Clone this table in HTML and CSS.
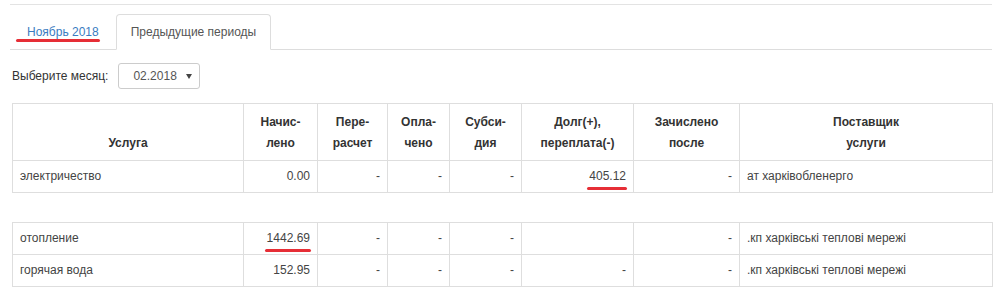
FILE: index.html
```html
<!DOCTYPE html>
<html lang="ru">
<head>
<meta charset="utf-8">
<title>Периоды</title>
<link rel="stylesheet" href="styles.css">
</head>
<body>
<div class="page">
  <div class="top-rule"></div>
  <ul class="tabs">
    <li class="tab"><a class="tab-link marked-tab" href="#">Ноябрь 2018</a></li>
    <li class="tab active"><a class="tab-link" href="#">Предыдущие периоды</a></li>
  </ul>
  <div class="month-row">
    <span class="month-label">Выберите месяц:</span>
    <span class="select">02.2018<span class="caret"></span></span>
  </div>
  <table class="grid">
    <colgroup>
      <col class="c1"><col class="c2"><col class="c3"><col class="c4"><col class="c5"><col class="c6"><col class="c7"><col class="c8">
    </colgroup>
    <thead>
      <tr>
        <th>Услуга</th>
        <th>Начис-<br>лено</th>
        <th>Пере-<br>расчет</th>
        <th>Опла-<br>чено</th>
        <th>Субси-<br>дия</th>
        <th>Долг(+),<br>переплата(-)</th>
        <th>Зачислено<br>после</th>
        <th>Поставщик<br>услуги</th>
      </tr>
    </thead>
    <tbody>
      <tr>
        <td>электричество</td>
        <td class="num">0.00</td>
        <td class="num">-</td>
        <td class="num">-</td>
        <td class="num">-</td>
        <td class="num"><span class="mark">405.12</span></td>
        <td class="num">-</td>
        <td>ат харківобленерго</td>
      </tr>
    </tbody>
  </table>
  <table class="grid second">
    <colgroup>
      <col class="c1"><col class="c2"><col class="c3"><col class="c4"><col class="c5"><col class="c6"><col class="c7"><col class="c8">
    </colgroup>
    <tbody>
      <tr>
        <td>отопление</td>
        <td class="num"><span class="mark">1442.69</span></td>
        <td class="num">-</td>
        <td class="num">-</td>
        <td class="num">-</td>
        <td class="num"></td>
        <td class="num">-</td>
        <td>.кп харківські теплові мережі</td>
      </tr>
      <tr>
        <td>горячая вода</td>
        <td class="num">152.95</td>
        <td class="num">-</td>
        <td class="num">-</td>
        <td class="num">-</td>
        <td class="num">-</td>
        <td class="num">-</td>
        <td>.кп харківські теплові мережі</td>
      </tr>
    </tbody>
  </table>
</div>
</body>
</html>
```

FILE: styles.css
```css
* { box-sizing: border-box; }
html, body { margin: 0; padding: 0; background: #fff; }
body {
  font-family: "Liberation Sans", Arial, sans-serif;
  font-size: 12px;
  color: #333;
}
.page {
  width: 992px;
  padding: 4px 0 0 12px;
}
.top-rule {
  margin-left: -2px;
  border-top: 1px solid #e3e3e3;
}
.tabs {
  list-style: none;
  margin: 9px 0 0 -2px;
  padding: 0 0 0 2px;
  display: flex;
  border-bottom: 1px solid #ddd;
}
.tab {
  margin: 0 2px -1px 0;
}
.tab-link {
  display: block;
  padding: 9px 14px;
  line-height: 16px;
  border: 1px solid transparent;
  border-radius: 4px 4px 0 0;
  text-decoration: none;
  color: #3a7cc1;
}
.tab.active .tab-link {
  color: #555;
  background: #fff;
  border-color: #ddd #ddd #fff;
}
.marked-tab { position: relative; }
.marked-tab::after {
  content: "";
  position: absolute;
  left: 3px;
  right: 13px;
  bottom: 7px;
  height: 3px;
  border-radius: 2px;
  background: #e62e36;
}
.month-row {
  display: flex;
  align-items: center;
  gap: 10px;
  margin-top: 13px;
}
.month-label { color: #333; }
.select {
  display: flex;
  align-items: center;
  width: 82px;
  height: 26px;
  padding: 0 0 0 14px;
  border: 1px solid #ccc;
  border-radius: 3px;
  color: #555;
}
.caret {
  margin-left: auto;
  margin-right: 7px;
  width: 0;
  height: 0;
  border-left: 3px solid transparent;
  border-right: 3px solid transparent;
  border-top: 5px solid #444;
}
.grid {
  width: 980px;
  table-layout: fixed;
  border-collapse: collapse;
  margin-top: 14px;
}
.grid.second { margin-top: 29px; }
.c1 { width: 231px; }
.c2 { width: 74px; }
.c3 { width: 70px; }
.c4 { width: 62px; }
.c5 { width: 72px; }
.c6 { width: 112px; }
.c7 { width: 106px; }
.c8 { width: 253px; }
.grid th, .grid td {
  border: 1px solid #dedede;
  line-height: 21px;
  white-space: nowrap;
}
.grid th {
  padding: 8px 7px 6px;
  font-weight: bold;
  text-align: center;
  vertical-align: bottom;
  color: #333;
}
.grid td {
  padding: 5px 7px;
  vertical-align: middle;
  color: #444;
}
.grid td.num { text-align: right; }
.mark {
  position: relative;
  display: inline-block;
}
.mark::after {
  content: "";
  position: absolute;
  left: -2px;
  right: -1px;
  bottom: -3px;
  height: 3px;
  border-radius: 2px;
  background: #e62e36;
}
```
